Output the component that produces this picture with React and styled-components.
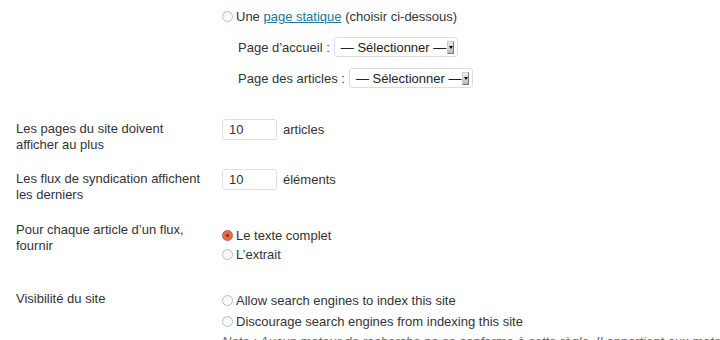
import styled, { createGlobalStyle } from "styled-components";

const Global = createGlobalStyle`
  body {
    margin: 0;
    background: #fff;
    font-family: "Liberation Sans", Arial, sans-serif;
    font-size: 13px;
    color: #333;
  }
`;

const Page = styled.div`
  width: 720px;
  height: 340px;
  overflow: hidden;
  padding: 6px 0 0 16px;
  box-sizing: border-box;
`;

const Row = styled.div`
  display: grid;
  grid-template-columns: 206px 1fr;
  margin-bottom: ${(p) => p.$gap || 0}px;
`;

const Label = styled.div`
  line-height: 16px;
  padding-top: ${(p) => p.$top || 0}px;
  width: 188px;
`;

const Field = styled.div`
  display: flex;
  flex-direction: column;
  gap: ${(p) => p.$gap || 0}px;
  padding-top: ${(p) => p.$top || 0}px;
`;

const Line = styled.label`
  display: flex;
  align-items: center;
  gap: 3px;
  height: ${(p) => p.$h || 19}px;
  padding-left: ${(p) => p.$indent || 0}px;
`;

const Radio = styled.span`
  width: 11px;
  height: 11px;
  border-radius: 50%;
  box-sizing: border-box;
  flex: none;
  border: 1px solid ${(p) => (p.$on ? "#c9553a" : "#bbb")};
  background: ${(p) =>
    p.$on
      ? "radial-gradient(circle, #a8331c 0 1.6px, #e8704f 2.2px, #e06443 100%)"
      : "linear-gradient(#f2f2f2, #fff)"};
`;

const Link = styled.a`
  color: #21759b;
  text-decoration: underline;
`;

const Select = styled.span`
  display: inline-flex;
  align-items: center;
  height: 20px;
  box-sizing: border-box;
  border: 1px solid #ddd;
  border-radius: 3px;
  background: #fff;
  padding: 0 3px 0 6px;
  margin-left: 1px;
  color: #222;
  gap: 1px;
`;

const Arrow = styled.span`
  width: 7px;
  height: 13px;
  box-sizing: border-box;
  border: 1px solid #999;
  border-color: #ccc #777 #777 #ccc;
  background: linear-gradient(#eee, #bbb);
  position: relative;
  &::after {
    content: "";
    position: absolute;
    left: 1px;
    top: 4px;
    border-left: 2px solid transparent;
    border-right: 2px solid transparent;
    border-top: 3px solid #000;
  }
`;

const Input = styled.span`
  display: inline-flex;
  align-items: center;
  width: 55px;
  height: 21px;
  box-sizing: border-box;
  border: 1px solid #dfdfdf;
  border-radius: 3px;
  padding-left: 6px;
  margin-right: 3px;
  color: #333;
`;

const Note = styled.p`
  margin: 0;
  line-height: 17px;
  color: #666;
  font-style: italic;
  white-space: nowrap;
`;

const Choice = ({ on, children, h }) => (
  <Line $h={h}>
    <Radio $on={on} />
    <span>{children}</span>
  </Line>
);

export default function App() {
  return (
    <Page>
      <Global />
      <Row $gap={31}>
        <div />
        <Field $gap={11}>
          <Line $h={20}>
            <Radio />
            <span>
              Une <Link>page statique</Link> (choisir ci-dessous)
            </span>
          </Line>
          <Line $indent={16} $h={20}>
            Page d’accueil :
            <Select>
              — Sélectionner —<Arrow />
            </Select>
          </Line>
          <Line $indent={16} $h={20}>
            Page des articles :
            <Select>
              — Sélectionner —<Arrow />
            </Select>
          </Line>
        </Field>
      </Row>
      <Row $gap={16}>
        <Label $top={2}>Les pages du site doivent afficher au plus</Label>
        <Line $h={21}>
          <Input>10</Input>articles
        </Line>
      </Row>
      <Row $gap={17}>
        <Label $top={2}>Les flux de syndication affichent les derniers</Label>
        <Line $h={21}>
          <Input>10</Input>éléments
        </Line>
      </Row>
      <Row $gap={27}>
        <Label $top={2}>Pour chaque article d’un flux, fournir</Label>
        <Field $top={6}>
          <Choice on>Le texte complet</Choice>
          <Choice>L’extrait</Choice>
        </Field>
      </Row>
      <Row>
        <Label $top={0}>Visibilité du site</Label>
        <Field $gap={2}>
          <Choice>Allow search engines to index this site</Choice>
          <Choice>Discourage search engines from indexing this site</Choice>
          <Note>
            Note : Aucun moteur de recherche ne se conforme à cette règle. Il appartient aux moteurs de recherche
          </Note>
        </Field>
      </Row>
    </Page>
  );
}
